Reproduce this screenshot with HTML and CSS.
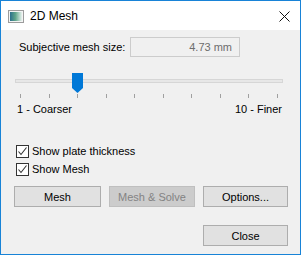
FILE: index.html
```html
<!DOCTYPE html>
<html lang="en">
<head>
    <meta charset="UTF-8">
    <title>2D Mesh</title>
    <link rel="stylesheet" href="styles.css">
</head>
<body>
    <div class="window">
        <header class="titlebar">
            <svg class="app-icon" width="16" height="13" viewBox="0 0 16 13">
                <defs>
                    <linearGradient id="ig" x1="0" y1="0" x2="1" y2="0">
                        <stop offset="0" stop-color="#2b6f8c"/>
                        <stop offset="0.45" stop-color="#5fa58a"/>
                        <stop offset="1" stop-color="#e8f2ee"/>
                    </linearGradient>
                </defs>
                <rect x="0.5" y="0.5" width="15" height="12" fill="#f4f4f4" stroke="#9c9c9c"/>
                <rect x="2" y="2" width="12" height="9" fill="url(#ig)"/>
            </svg>
            <span class="title">2D Mesh</span>
            <svg class="close-x" width="11" height="11" viewBox="0 0 11 11">
                <path d="M0.5 0.5 L10.5 10.5 M10.5 0.5 L0.5 10.5" stroke="#111" stroke-width="1"/>
            </svg>
        </header>

        <main class="content">
            <div class="size-row">
                <label class="size-label">Subjective mesh size:</label>
                <div class="size-box">4.73 mm</div>
            </div>

            <div class="slider">
                <div class="track"></div>
                <div class="thumb">
                    <svg width="11" height="20" viewBox="0 0 11 20">
                        <path d="M0 0 H11 V15 L5.5 20 L0 15 Z" fill="#0078d7"/>
                    </svg>
                </div>
            </div>
            <div class="ticks">
                <span></span><span></span><span></span><span></span><span></span>
                <span></span><span></span><span></span><span></span><span></span>
            </div>
            <div class="range-labels">
                <span>1 - Coarser</span>
                <span>10 - Finer</span>
            </div>

            <div class="checks">
                <label class="check-row"><span class="box"><svg width="11" height="11" viewBox="0 0 11 11"><path d="M1.5 5.5 L4 8.5 L9.5 1.5" fill="none" stroke="#333" stroke-width="1.1"/></svg></span>Show plate thickness</label>
                <label class="check-row"><span class="box"><svg width="11" height="11" viewBox="0 0 11 11"><path d="M1.5 5.5 L4 8.5 L9.5 1.5" fill="none" stroke="#333" stroke-width="1.1"/></svg></span>Show Mesh</label>
            </div>

            <div class="buttons">
                <button class="btn">Mesh</button>
                <button class="btn" disabled>Mesh &amp; Solve</button>
                <button class="btn">Options...</button>
            </div>
            <div class="buttons bottom">
                <button class="btn close-btn">Close</button>
            </div>
        </main>
    </div>
</body>
</html>
```

FILE: styles.css
```css
body {
    margin: 0;
    font-family: "Liberation Sans", Arial, sans-serif;
    font-size: 11px;
    color: #000;
    background-color: #f0f0f0;
}

.window {
    width: 301px;
    height: 255px;
    box-sizing: border-box;
    border: 1px solid #1883d7;
    display: flex;
    flex-direction: column;
    background-color: #f0f0f0;
}

.titlebar {
    height: 29px;
    background-color: #fff;
    display: flex;
    align-items: center;
    padding-left: 7px;
    padding-right: 10px;
}

.app-icon {
    margin-top: 1px;
}

.title {
    margin-left: 6px;
    font-size: 12px;
    flex: 1;
}

.close-x {
    margin-top: 1px;
}

.content {
    flex: 1;
    padding: 7px 12px 0 13px;
}

.size-row {
    display: flex;
    align-items: center;
    height: 20px;
}

.size-label {
    width: 116px;
    padding-left: 5px;
    box-sizing: border-box;
    white-space: nowrap;
}

.size-box {
    width: 110px;
    height: 20px;
    box-sizing: border-box;
    border: 1px solid #cccccc;
    color: #6d6d6d;
    text-align: right;
    padding-right: 7px;
    line-height: 18px;
}

.slider {
    position: relative;
    height: 20px;
    margin: 16px 5px 0 1px;
}

.track {
    position: absolute;
    left: 0;
    right: 0;
    top: 6px;
    height: 4px;
    box-sizing: border-box;
    background-color: #e7e7e7;
    border: 1px solid #d6d6d6;
}

.thumb {
    position: absolute;
    left: 57px;
    top: 0;
    height: 20px;
}

.ticks {
    display: flex;
    justify-content: space-between;
    margin: 0 10px 0 6px;
    height: 5px;
}

.ticks span {
    width: 1px;
    height: 4px;
    margin-top: 1px;
    background-color: #a0a0a0;
}

.range-labels {
    display: flex;
    justify-content: space-between;
    margin: 4px 6px 0 3px;
    line-height: 14px;
}

.checks {
    margin-top: 26px;
    padding-left: 2px;
}

.check-row {
    display: flex;
    align-items: center;
    height: 18px;
}

.box {
    width: 13px;
    height: 13px;
    box-sizing: border-box;
    border: 1px solid #333;
    background-color: #fff;
    margin-right: 3px;
    display: flex;
    align-items: center;
    justify-content: center;
}

.buttons {
    display: grid;
    grid-template-columns: 87px 86px 85px;
    column-gap: 8px;
    margin-top: 8px;
}

.buttons.bottom {
    margin-top: 18px;
}

.btn {
    height: 21px;
    font-family: "Liberation Sans", Arial, sans-serif;
    font-size: 11px;
    color: #000;
    background-color: #e1e1e1;
    border: 1px solid #adadad;
    padding: 0;
}

.btn:disabled {
    background-color: #cccccc;
    border-color: #bfbfbf;
    color: #838383;
}

.close-btn {
    grid-column: 3;
}
```
